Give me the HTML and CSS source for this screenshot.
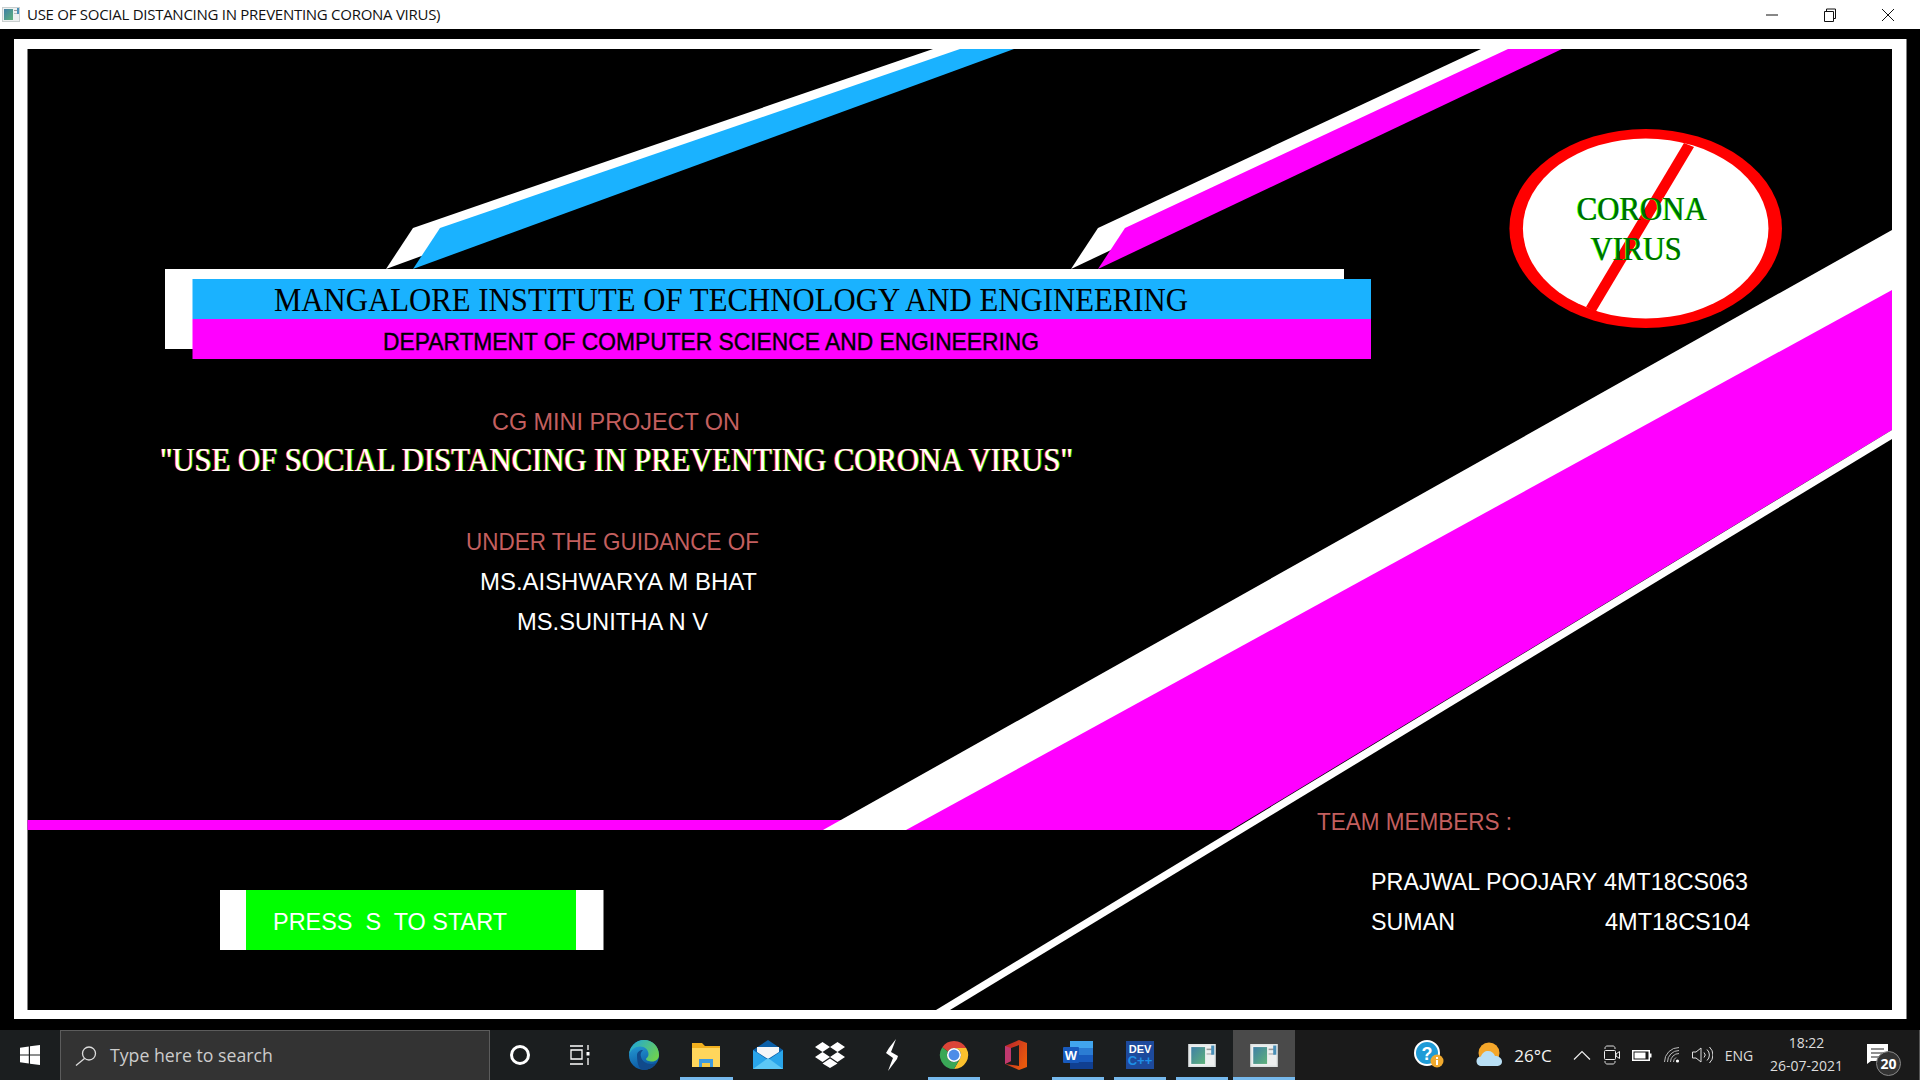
FILE: index.html
```html
<!DOCTYPE html>
<html lang="en">
<head>
<meta charset="utf-8">
<title>USE OF SOCIAL DISTANCING IN PREVENTING CORONA VIRUS)</title>
<link rel="stylesheet" href="styles.css">
</head>
<body>
<div class="window">
  <header class="titlebar">
    <svg class="title-icon" viewBox="0 0 18 15"><rect width="18" height="15" fill="#c9cfcf"/><rect x="1" y="1" width="16" height="13" fill="#eef0f0"/><rect x="2" y="2" width="9" height="11" fill="url(#appFill)"/><rect x="12" y="3" width="4" height="1" fill="#999"/><rect x="12" y="6" width="4" height="1" fill="#bbb"/><rect x="15" y="1" width="2" height="6" fill="#4a90b8"/></svg>
    <span class="title-text">USE OF SOCIAL DISTANCING IN PREVENTING CORONA VIRUS)</span>
    <div class="controls">
      <span class="ctl"><svg width="14" height="14" viewBox="0 0 14 14"><path d="M1 7h12" stroke="#111" fill="none"/></svg></span>
      <span class="ctl"><svg width="14" height="14" viewBox="0 0 14 14"><path d="M1.500 3.500h9v10h-9zM3.500 3.500V1h9v9.500h-2" stroke="#111" fill="none"/></svg></span>
      <span class="ctl"><svg width="14" height="14" viewBox="0 0 14 14"><path d="M1 1l12 12M13 1L1 13" stroke="#111" fill="none"/></svg></span>
    </div>
  </header>

  <svg class="canvas" viewBox="0 29 1920 1001">
    <defs>
      <linearGradient id="appFill" x1="0" y1="0" x2="1" y2="1"><stop offset="0" stop-color="#3f7fa6"/><stop offset="1" stop-color="#5fb27a"/></linearGradient>
    </defs>
    <rect x="14" y="39" width="1892.500" height="980" class="white"/>
    <rect x="27.500" y="49" width="1864.500" height="961" class="black"/>

    <polygon points="386,269 413,228 933,49 987,49" class="white"/>
    <polygon points="413,269 440,228 960,49 1014,49" class="blue"/>
    <polygon points="1071,269 1098,228 1481,49 1535,49" class="white"/>
    <polygon points="1098,269 1125,228 1508,49 1562,49" class="magenta"/>

    <rect x="165" y="269" width="1179" height="80" class="white"/>
    <rect x="192.500" y="279" width="1178.500" height="40" class="blue"/>
    <rect x="192.500" y="319" width="1178.500" height="40" class="magenta"/>
    <text x="274" y="311" textLength="914" lengthAdjust="spacingAndGlyphs" class="serif ink">MANGALORE INSTITUTE OF TECHNOLOGY AND ENGINEERING</text>
    <text x="383" y="350" textLength="656" lengthAdjust="spacingAndGlyphs" class="sans ink heavy">DEPARTMENT OF COMPUTER SCIENCE AND ENGINEERING</text>

    <ellipse cx="1645.700" cy="228.500" rx="136.300" ry="99.500" class="red"/>
    <ellipse cx="1645.700" cy="228.500" rx="122.800" ry="90" class="white"/>
    <polygon points="1684,143 1694,147 1595.500,312 1586,307" class="red"/>
    <text x="1577" y="220" textLength="130" lengthAdjust="spacingAndGlyphs" class="serif virus">CORONA</text>
    <text x="1591" y="260" textLength="91" lengthAdjust="spacingAndGlyphs" class="serif virus">VIRUS</text>

    <rect x="27.500" y="820" width="830" height="10" class="magenta"/>
    <polygon points="1892,230 1892,300 1200,830 823,830" class="white"/>
    <polygon points="1892,290 1892,430 1231,830 906,830" class="magenta"/>
    <polygon points="1892,430 1892,439 950,1010 936,1010" class="white"/>

    <text x="492" y="430" textLength="248" lengthAdjust="spacingAndGlyphs" class="sans rose">CG MINI PROJECT ON</text>
    <text x="160" y="471" textLength="913" lengthAdjust="spacingAndGlyphs" class="serif fringe">"USE OF SOCIAL DISTANCING IN PREVENTING CORONA VIRUS"</text>
    <text x="466" y="550" textLength="293" lengthAdjust="spacingAndGlyphs" class="sans rose">UNDER THE GUIDANCE OF</text>
    <text x="480" y="590" textLength="277" lengthAdjust="spacingAndGlyphs" class="sans light">MS.AISHWARYA M BHAT</text>
    <text x="517" y="630" textLength="191" lengthAdjust="spacingAndGlyphs" class="sans light">MS.SUNITHA N V</text>

    <rect x="220" y="890" width="383.500" height="60" class="white"/>
    <rect x="246" y="890" width="330" height="60" class="green"/>
    <text x="273" y="930" textLength="234" lengthAdjust="spacingAndGlyphs" class="sans light keep">PRESS  S  TO START</text>

    <text x="1317" y="830" textLength="195" lengthAdjust="spacingAndGlyphs" class="sans rose">TEAM MEMBERS :</text>
    <text x="1371" y="890" textLength="226" lengthAdjust="spacingAndGlyphs" class="sans light">PRAJWAL POOJARY</text>
    <text x="1604" y="890" textLength="144" lengthAdjust="spacingAndGlyphs" class="sans light">4MT18CS063</text>
    <text x="1371" y="930" textLength="84" lengthAdjust="spacingAndGlyphs" class="sans light">SUMAN</text>
    <text x="1605" y="930" textLength="145" lengthAdjust="spacingAndGlyphs" class="sans light">4MT18CS104</text>
  </svg>

  <footer class="taskbar">
    <div class="start"><svg width="20" height="20" viewBox="0 0 20 20"><path d="M0 2.800L8.800 1.500V9.400H0zM10 1.300L20 0V9.400H10zM0 10.600H8.800V18.500L0 17.200zM10 10.600H20V20L10 18.700z" fill="#fff"/></svg></div>
    <div class="search">
      <svg width="22" height="20" viewBox="0 0 22 20"><circle cx="14" cy="7.500" r="6.500" fill="none" stroke="#ddd" stroke-width="1.300"/><path d="M9.500 12.500L1 19.500" stroke="#ddd" stroke-width="1.300"/></svg>
      <span class="search-text">Type here to search</span>
    </div>
    <div class="sys"><svg width="22" height="22" viewBox="0 0 22 22"><circle cx="11" cy="11" r="8.500" fill="none" stroke="#fff" stroke-width="3"/></svg></div>
    <div class="sys"><svg width="22" height="20" viewBox="0 0 22 20"><path d="M1 1h13M1 19h13M2 5h11v9H2z" fill="none" stroke="#fff" stroke-width="1.300"/><path d="M19 0v5M19 13v7" stroke="#fff" stroke-width="1.300"/><rect x="17.500" y="7" width="3" height="3.500" fill="#fff"/></svg></div>

    <div class="apps">
      <div class="app"><svg width="32" height="32" viewBox="0 0 32 32">
        <defs>
          <linearGradient id="edgeA" x1="0" y1="0" x2="0.300" y2="1"><stop offset="0" stop-color="#2aa9de"/><stop offset="1" stop-color="#0c59a4"/></linearGradient>
          <linearGradient id="edgeB" x1="0" y1="0.200" x2="1" y2="0.700"><stop offset="0" stop-color="#1fa6d8"/><stop offset="1" stop-color="#6fd24d"/></linearGradient>
        </defs>
        <circle cx="16" cy="16" r="15" fill="url(#edgeA)"/>
        <path d="M16 1C24.500 1 31 7.500 31 16c0 4-3 6.500-7 6.500-3 0-6-1-6-2.500 0-1 2.500-1.500 2.500-5 0-4-3.500-7.500-8.500-7.500-5 0-9 3-11 8C2 7.500 8 1 16 1z" fill="url(#edgeB)"/>
        <path d="M9 16c0-3 3-5 6-5-2 2-3 4-2 7 1 4 5 7 10 7 2 0 4-.5 5.500-1.500C25.500 28 21 31 16 31c-4.500 0-7-5-7-15z" fill="#114a8b"/>
      </svg></div>
      <div class="app open narrow"><svg width="30" height="28" viewBox="0 0 30 28"><path d="M1 2h10l3 3h15v21H1z" fill="#f2b01e"/><path d="M1 7h28v19H1z" fill="#ffd65c"/><path d="M8 18h14v8h-3v-4h-8v4H8z" fill="#3f9be0"/><rect x="11" y="22" width="8" height="4" fill="#f7c948"/></svg></div>
      <div class="app"><svg width="32" height="30" viewBox="0 0 32 30"><path d="M16 0L31 10V29H1V10z" fill="#0a5fa8"/><path d="M5 7H27V12L16 19 5 12z" fill="#f4f6f8"/><path d="M1 10L16 20 31 10V29H1z" fill="#29a5ea"/><path d="M1 29L16 18 31 29z" fill="#5cc7f5"/></svg></div>
      <div class="app"><svg width="30" height="26" viewBox="0 0 30 26"><path d="M7.500 0L15 5 7.500 10 0 5zM22.500 0L30 5 22.500 10 15 5zM7.500 10L15 15 7.500 20 0 15zM22.500 10L30 15 22.500 20 15 15zM15 16.500L22.500 21.500 15 26 7.500 21.500z" fill="#fff"/></svg></div>
      <div class="app"><svg width="14" height="32" viewBox="0 0 14 32"><path d="M11 0L4 9 1 14 8 19 6 24 3 32 12 20 13 17 6 13 8 8z" fill="#fff"/></svg></div>
      <div class="app open"><svg width="30" height="30" viewBox="0 0 32 32">
        <path d="M16 1A15 15 0 0 1 29 8.500H16A7.500 7.500 0 0 0 9.500 12.250L3.500 7.700A15 15 0 0 1 16 1z" fill="#db4437"/>
        <path d="M29 8.500A15 15 0 0 1 16 31L22.500 19.750A7.500 7.500 0 0 0 22.500 12.250 7.500 7.500 0 0 0 16 8.500z" fill="#fbc02d"/>
        <path d="M3.500 7.700A15 15 0 0 0 16 31L22.500 19.750A7.500 7.500 0 0 1 9.500 19.750 7.500 7.500 0 0 1 9.500 12.250z" fill="#3aa757"/>
        <circle cx="16" cy="16" r="7.500" fill="#fff"/><circle cx="16" cy="16" r="5.800" fill="#4d8de8"/>
      </svg></div>
      <div class="app"><svg width="24" height="30" viewBox="0 0 24 30"><defs><linearGradient id="off" x1="0" y1="0" x2="1" y2="0.600"><stop offset="0" stop-color="#b8202e"/><stop offset="1" stop-color="#e8590c"/></linearGradient></defs><path d="M1 6L15 0 23 3V27L15 30 1 24 15 26V5L7 8V21L1 24z" fill="url(#off)"/><path d="M1 6L7 8V21L1 24z" fill="#c0396f"/></svg></div>
      <div class="app open"><svg width="30" height="28" viewBox="0 0 30 28"><rect x="7" y="0" width="23" height="7" fill="#41a5ee"/><rect x="7" y="7" width="23" height="7" fill="#2b7cd3"/><rect x="7" y="14" width="23" height="7" fill="#185abd"/><rect x="7" y="21" width="23" height="7" fill="#103f91"/><rect x="0" y="6" width="16" height="16" rx="1" fill="#185abd"/><text x="8" y="18.500" class="word-w">W</text></svg></div>
      <div class="app open"><svg width="28" height="28" viewBox="0 0 28 28"><rect width="28" height="28" fill="#1d4a9c"/><text x="14" y="12" class="dev-a">DEV</text><text x="14" y="24" class="dev-b">C++</text></svg></div>
      <div class="app open"><svg width="28" height="23" viewBox="0 0 18 15"><rect width="18" height="15" fill="#dfe4e4"/><rect x="1" y="1" width="16" height="13" fill="#eef0f0"/><rect x="2" y="2" width="9" height="11" fill="url(#appFill)"/><rect x="12" y="3" width="4" height="1" fill="#999"/><rect x="12" y="6" width="4" height="1" fill="#bbb"/><rect x="15" y="1" width="2" height="6" fill="#4a90b8"/></svg></div>
      <div class="app active"><svg width="28" height="23" viewBox="0 0 18 15"><rect width="18" height="15" fill="#dfe4e4"/><rect x="1" y="1" width="16" height="13" fill="#eef0f0"/><rect x="2" y="2" width="9" height="11" fill="url(#appFill)"/><rect x="12" y="3" width="4" height="1" fill="#999"/><rect x="12" y="6" width="4" height="1" fill="#bbb"/><rect x="15" y="1" width="2" height="6" fill="#4a90b8"/></svg></div>
    </div>

    <div class="tray">
      <div class="t-help"><svg width="32" height="30" viewBox="0 0 32 30"><circle cx="13" cy="13" r="12" fill="#1e9bd7" stroke="#fff" stroke-width="2"/><text x="13" y="19.500" class="help-q">?</text><circle cx="23" cy="21" r="6.500" fill="#f0a92e"/><rect x="22" y="20" width="2" height="5" fill="#fff"/><rect x="22" y="17" width="2" height="2" fill="#fff"/></svg></div>
      <div class="t-weather"><svg width="28" height="26" viewBox="0 0 28 26"><circle cx="13" cy="11" r="10.500" fill="#f4a62a"/><path d="M6 24c-3.500 0-5.500-2-5.500-5 0-2.500 2-4.500 4.500-4.500 1-3.500 4-5.500 7-5.500 3.500 0 6 2 7 5 3.500 0 7 2 7 5.500S23 24 21 24z" fill="#b9dff5"/></svg></div>
      <div class="t-temp">26°C</div>
      <div class="t-ico"><svg width="18" height="10" viewBox="0 0 18 10"><path d="M1 9.500L9 1.500 17 9.500" fill="none" stroke="#eee" stroke-width="1.200"/></svg></div>
      <div class="t-ico"><svg width="16" height="20" viewBox="0 0 16 20"><path d="M1 4V3c0-1 1-2 2-2h6c1 0 2 1 2 2v1M1 16v1c0 1 1 2 2 2h6c1 0 2-1 2-2v-1" fill="none" stroke="#ddd"/><rect x=".500" y="5.500" width="11" height="9" rx="1" fill="none" stroke="#eee"/><path d="M12 9L15.500 6.500V13.500L12 11z" fill="none" stroke="#eee"/></svg></div>
      <div class="t-ico"><svg width="20" height="11" viewBox="0 0 20 11"><rect x=".750" y=".750" width="16.500" height="9.500" fill="none" stroke="#fff" stroke-width="1.500"/><rect x="2.500" y="2.500" width="11" height="6" fill="#fff"/><rect x="18" y="3.500" width="1.500" height="4" fill="#fff"/></svg></div>
      <div class="t-ico"><svg width="16" height="16" viewBox="0 0 16 16"><path d="M.500 15A14.500 14.500 0 0 1 15 .500M3.500 15A11.500 11.500 0 0 1 15 3.500M6.500 15A8.500 8.500 0 0 1 15 6.500M9.500 15A5.500 5.500 0 0 1 12 10.500" fill="none" stroke="#bbb"/><circle cx="13.500" cy="14" r="1.600" fill="#fff"/></svg></div>
      <div class="t-ico"><svg width="21" height="18" viewBox="0 0 21 18"><path d="M.500 6H4L9 2V16L4 12H.500z" fill="none" stroke="#ddd"/><path d="M12 6.500a3.500 3.500 0 0 1 0 5M15 3.500a7.500 7.500 0 0 1 0 11M17.500 1a11 11 0 0 1 0 16" fill="none" stroke="#ddd"/></svg></div>
      <div class="t-eng">ENG</div>
      <div class="t-clock"><span>18:22</span><span>26-07-2021</span></div>
      <div class="t-notif">
        <svg width="22" height="20" viewBox="0 0 22 20"><path d="M0 0H21V17H4L0 20z" fill="#fff"/><path d="M4 5H17M4 9H17M4 13H13" stroke="#222" stroke-width="1.200"/></svg>
        <span class="badge">20</span>
      </div>
    </div>
  </footer>
</div>
</body>
</html>
```

FILE: styles.css
```css
* { box-sizing: border-box; }
html, body { margin: 0; padding: 0; height: 100%; overflow: hidden; }
body { background: #000; font-family: "Open Sans", "Noto Sans", sans-serif; }

.window { display: flex; flex-direction: column; width: 1920px; height: 1080px; }

.titlebar { display: flex; align-items: center; height: 29px; flex: none; background: #fff; padding-left: 2px; }
.title-icon { width: 18px; height: 15px; flex: none; }
.title-text { margin: -2px 0 0 7px; font-size: 15px; color: #111; letter-spacing: -0.27px; white-space: nowrap; }
.controls { display: flex; margin-left: auto; padding-right: 3px; }
.ctl { display: flex; align-items: center; justify-content: center; width: 58px; height: 29px; }

.canvas { display: block; width: 1920px; height: 1001px; flex: none; background: #000; }
.white { fill: #fff; }
.black { fill: #000; }
.blue { fill: #1ab2ff; }
.magenta { fill: #ff00ff; }
.red { fill: #ff0000; }
.green { fill: #00ff00; }

.serif { font-family: "Liberation Serif", serif; font-size: 33px; }
.sans { font-family: "Liberation Sans", sans-serif; font-size: 24px; }
.ink { fill: #000; }
.heavy { stroke: #000; stroke-width: 0.4px; }
.rose { fill: #c35f5f; }
.light { fill: #fff; }
.keep { white-space: pre; }
.virus { fill: #006a00; text-shadow: -1px 0 0 #00ff00; }
.fringe { fill: #fff; text-shadow: -1.2px 0 0 #ff2020, 1.2px 0 0 #00d000; }

.taskbar { display: flex; align-items: stretch; height: 50px; flex: none; background: #1b1e1f; }
.start { display: flex; align-items: center; justify-content: center; width: 60px; flex: none; }
.search { display: flex; align-items: center; width: 430px; flex: none; padding-left: 14px; background: #333; border: 1px solid #5c5c5c; border-bottom-width: 0; }
.search-text { margin: -2px 0 0 13px; font-size: 17.700px; color: #ccc; white-space: nowrap; }
.sys { display: flex; align-items: center; justify-content: center; width: 60px; flex: none; }

.apps { display: flex; margin-left: 3px; flex: none; }
.app { position: relative; display: flex; align-items: center; justify-content: center; width: 62px; height: 50px; }
.app.open::after { content: ""; position: absolute; left: 5px; right: 5px; bottom: 0; height: 3px; background: #76b9ed; }
.app.narrow::after { left: 5px; right: 4px; }
.app.active { background: #4a4a4a; }
.app.active::after { content: ""; position: absolute; left: 0; right: 0; bottom: 0; height: 3px; background: #76b9ed; }

.word-w { font-family: "Liberation Sans", sans-serif; font-size: 13px; font-weight: 700; fill: #fff; text-anchor: middle; }
.dev-a { font-family: "Liberation Sans", sans-serif; font-size: 11px; font-weight: 700; fill: #fff; text-anchor: middle; }
.dev-b { font-family: "Liberation Sans", sans-serif; font-size: 13px; font-weight: 700; fill: #1e90e8; text-anchor: middle; }
.help-q { font-family: "Liberation Sans", sans-serif; font-size: 18px; font-weight: 700; fill: #fff; text-anchor: middle; }

.tray { display: flex; align-items: center; justify-content: flex-end; flex: 1; padding-right: 17px; background: #1a1a1a; color: #fff; border-right: 1px solid #555; }
.t-help { display: flex; justify-content: center; width: 40px; margin-right: 25px; padding-left: 7px; }
.t-weather { display: flex; justify-content: center; width: 36px; margin-right: 4px; padding-left: 1px; }
.t-temp { width: 44px; margin-right: 12px; font-size: 17px; text-align: center; color: #f2f2f2; }
.t-ico { display: flex; justify-content: center; align-items: center; width: 30px; }
.t-eng { width: 40px; margin-left: 2px; font-size: 14px; text-align: center; color: #ddd; }
.t-clock { display: flex; flex-direction: column; align-items: center; gap: 5px; width: 95px; margin-top: -2px; font-size: 14px; line-height: 18px; color: #ddd; }
.t-notif { position: relative; display: flex; justify-content: center; width: 48px; margin-top: -2px; }
.badge { position: absolute; left: 22px; top: 7px; width: 25px; height: 25px; border-radius: 50%; background: #333; border: 1px solid #888; color: #fff; font-size: 14px; font-weight: 700; line-height: 23px; text-align: center; }
```
